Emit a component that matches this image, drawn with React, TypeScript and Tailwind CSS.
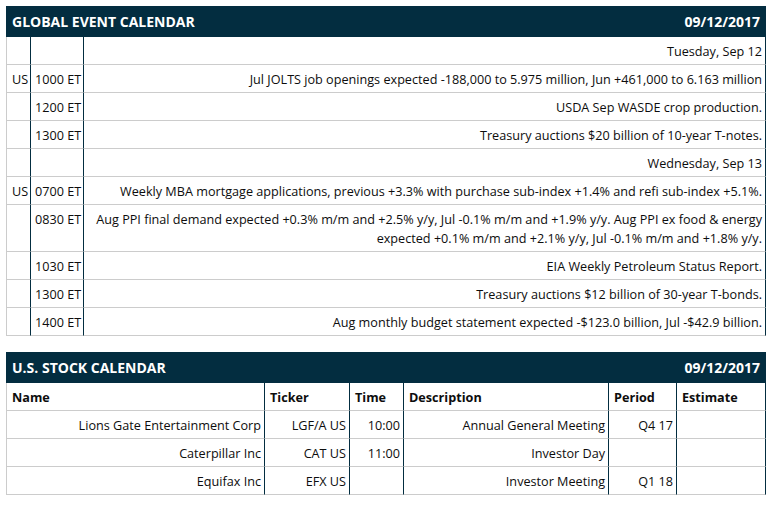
const events = [
  { c: "", t: "", d: "Tuesday, Sep 12" },
  { c: "US", t: "1000 ET", d: "Jul JOLTS job openings expected -188,000 to 5.975 million, Jun +461,000 to 6.163 million" },
  { c: "", t: "1200 ET", d: "USDA Sep WASDE crop production." },
  { c: "", t: "1300 ET", d: "Treasury auctions $20 billion of 10-year T-notes." },
  { c: "", t: "", d: "Wednesday, Sep 13" },
  { c: "US", t: "0700 ET", d: "Weekly MBA mortgage applications, previous +3.3% with purchase sub-index +1.4% and refi sub-index +5.1%." },
  { c: "", t: "0830 ET", d: "Aug PPI final demand expected +0.3% m/m and +2.5% y/y, Jul -0.1% m/m and +1.9% y/y. Aug PPI ex food & energy expected +0.1% m/m and +2.1% y/y, Jul -0.1% m/m and +1.8% y/y." },
  { c: "", t: "1030 ET", d: "EIA Weekly Petroleum Status Report." },
  { c: "", t: "1300 ET", d: "Treasury auctions $12 billion of 30-year T-bonds." },
  { c: "", t: "1400 ET", d: "Aug monthly budget statement expected -$123.0 billion, Jul -$42.9 billion." },
];

const stocks = [
  ["Lions Gate Entertainment Corp", "LGF/A US", "10:00", "Annual General Meeting", "Q4 17", ""],
  ["Caterpillar Inc", "CAT US", "11:00", "Investor Day", "", ""],
  ["Equifax Inc", "EFX US", "", "Investor Meeting", "Q1 18", ""],
];

const stockCols = ["w-[259px] border-l border-l-[#cccccc]", "w-[85px]", "w-[54px]", "w-[205px]", "w-[68px]", "w-[89px]"];
const stockHeads = ["Name", "Ticker", "Time", "Description", "Period", "Estimate"];

function TitleBar({ title, date }: { title: string; date: string }) {
  return (
    <div className="flex h-[31px] items-center justify-between bg-[#032d40] px-[6px] text-[14px] font-bold text-white">
      <span>{title}</span>
      <span>{date}</span>
    </div>
  );
}

export default function App() {
  const cell = "border-b border-r border-b-[#cccccc] border-r-[#032d40] pt-[5px] pb-[3px] leading-[19px]";
  return (
    <div
      className="w-[774px] bg-white p-[6px] text-[12.65px] text-[#0d0d0d]"
      style={{ fontFamily: '"Open Sans", "Liberation Sans", sans-serif' }}
    >
      <div className="w-[760px]">
        <TitleBar title="GLOBAL EVENT CALENDAR" date="09/12/2017" />
        {events.map((e, i) => (
          <div key={i} className="flex">
            <div className={`${cell} w-[25px] shrink-0 border-l border-l-[#cccccc] pl-[5px]`}>{e.c}</div>
            <div className={`${cell} w-[53px] shrink-0 pl-[4px]`}>{e.t}</div>
            <div className={`${cell} min-h-[28px] flex-1 pl-[6px] pr-[3px] text-right`}>{e.d}</div>
          </div>
        ))}
      </div>

      <div className="mt-[16px] w-[760px]">
        <TitleBar title="U.S. STOCK CALENDAR" date="09/12/2017" />
        <div className="flex font-bold">
          {stockHeads.map((h, i) => (
            <div key={h} className={`${cell} ${stockCols[i]} h-[28px] shrink-0 pl-[5px]`}>{h}</div>
          ))}
        </div>
        {stocks.map((row, r) => (
          <div key={r} className="flex">
            {row.map((v, i) => (
              <div key={i} className={`${cell} ${stockCols[i]} h-[28px] shrink-0 pr-[3px] text-right`}>{v}</div>
            ))}
          </div>
        ))}
      </div>
    </div>
  );
}
